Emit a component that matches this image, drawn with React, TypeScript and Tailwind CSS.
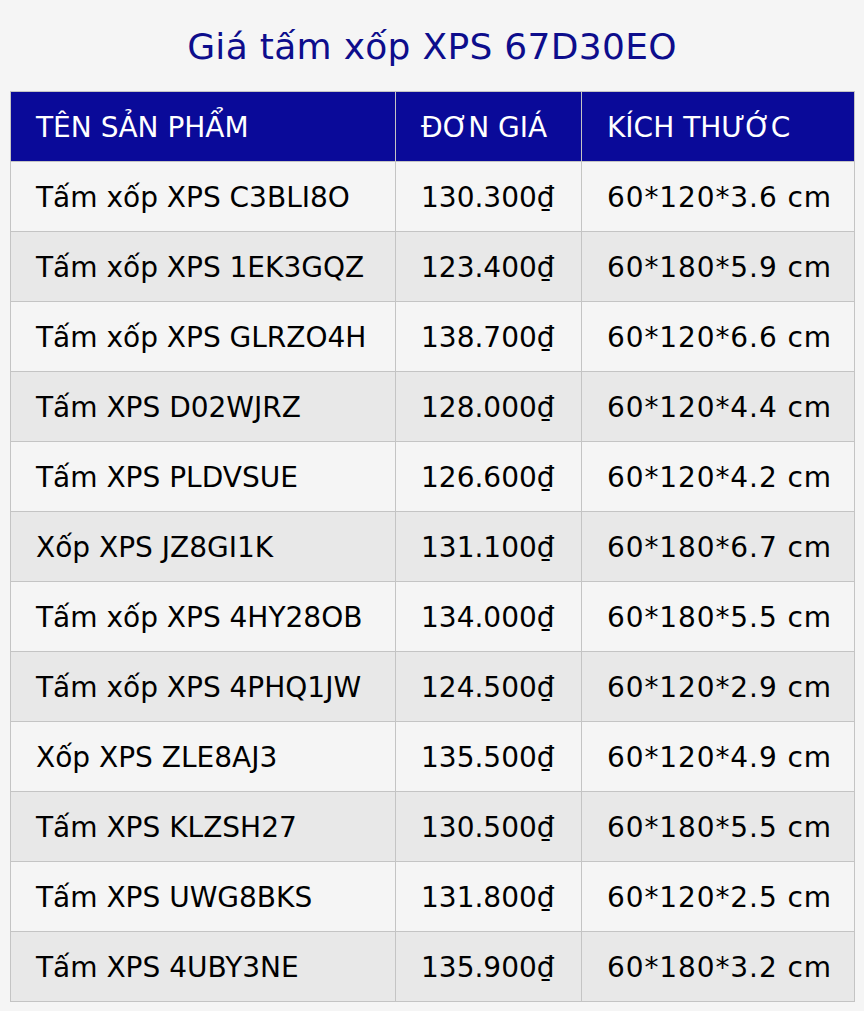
const rows: [string, string, string][] = [
  ['Tấm xốp XPS C3BLI8O', '130.300₫', '60*120*3.6 cm'],
  ['Tấm xốp XPS 1EK3GQZ', '123.400₫', '60*180*5.9 cm'],
  ['Tấm xốp XPS GLRZO4H', '138.700₫', '60*120*6.6 cm'],
  ['Tấm XPS D02WJRZ', '128.000₫', '60*120*4.4 cm'],
  ['Tấm XPS PLDVSUE', '126.600₫', '60*120*4.2 cm'],
  ['Xốp XPS JZ8GI1K', '131.100₫', '60*180*6.7 cm'],
  ['Tấm xốp XPS 4HY28OB', '134.000₫', '60*180*5.5 cm'],
  ['Tấm xốp XPS 4PHQ1JW', '124.500₫', '60*120*2.9 cm'],
  ['Xốp XPS ZLE8AJ3', '135.500₫', '60*120*4.9 cm'],
  ['Tấm XPS KLZSH27', '130.500₫', '60*180*5.5 cm'],
  ['Tấm XPS UWG8BKS', '131.800₫', '60*120*2.5 cm'],
  ['Tấm XPS 4UBY3NE', '135.900₫', '60*180*3.2 cm'],
]

export default function App() {
  return (
    <div className="min-h-[1011px] bg-[#f5f5f5] px-[10px] font-['DejaVu_Sans',sans-serif]">
      <h1 className="h-[91px] pt-[21px] text-center text-[36px] leading-[52px] tracking-[0.3px] text-[#0d0d8c]">
        Giá tấm xốp XPS 67D30EO
      </h1>
      <table className="w-[844px] table-fixed border-collapse text-[28px]">
        <colgroup>
          <col className="w-[385px]" />
          <col className="w-[186px]" />
          <col className="w-[273px]" />
        </colgroup>
        <thead>
          <tr className="h-[70px] bg-[#0a0a99] text-white">
            <th className="border border-[#c4c4c4] pl-[25px] pt-[2px] text-left font-normal">TÊN SẢN PHẨM</th>
            <th className="border border-[#c4c4c4] pl-[25px] pt-[2px] text-left font-normal">ĐƠN GIÁ</th>
            <th className="border border-[#c4c4c4] pl-[25px] pt-[2px] text-left font-normal">KÍCH THƯỚC</th>
          </tr>
        </thead>
        <tbody>
          {rows.map(([name, price, size], i) => (
            <tr key={name} className={`h-[70px] text-black ${i % 2 ? 'bg-[#e8e8e8]' : 'bg-[#f5f5f5]'}`}>
              <td className="border border-[#c4c4c4] pl-[25px] pt-[2px]">{name}</td>
              <td className="border border-[#c4c4c4] pl-[25px] pt-[2px]">{price}</td>
              <td className="border border-[#c4c4c4] pl-[25px] pt-[2px] tracking-[0.9px]">{size}</td>
            </tr>
          ))}
        </tbody>
      </table>
    </div>
  )
}
